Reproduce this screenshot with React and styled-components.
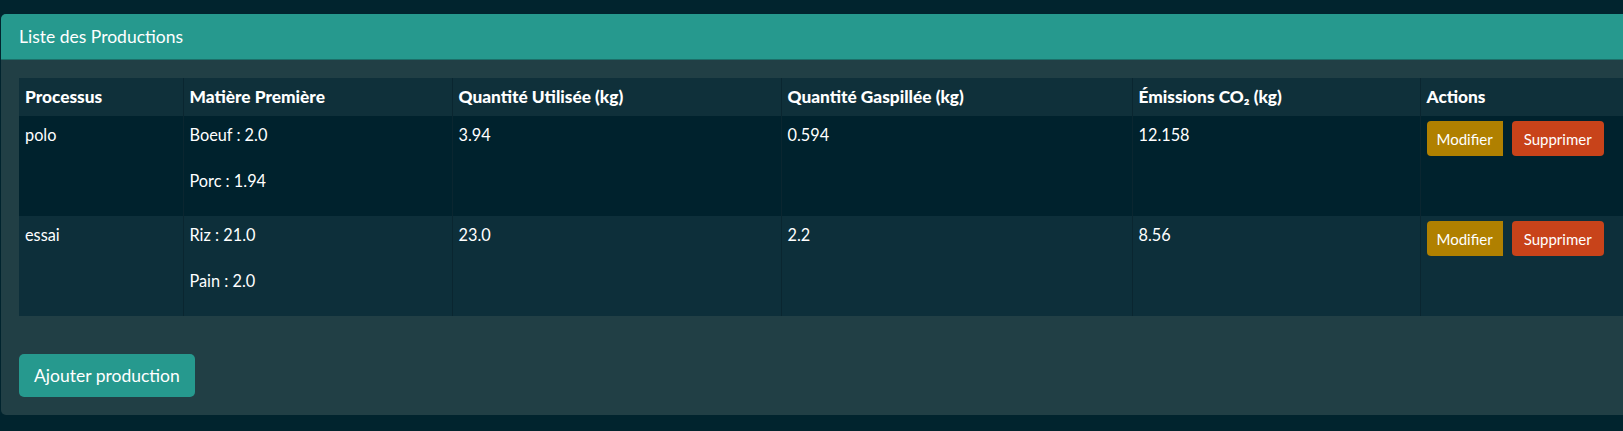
import React from "react";
import styled, { createGlobalStyle } from "styled-components";

const Global = createGlobalStyle`
  html, body { margin: 0; padding: 0; overflow: hidden; background: #01242e; }
  body { font-family: "Lato", "Noto Sans", sans-serif; color: #ffffff; }
  * { box-sizing: border-box; }
`;

const Page = styled.div`
  padding: 14px 0 0 1px;
  min-height: 431px;
`;

const Card = styled.section`
  width: 1700px;
  background: #213f45;
  border-radius: 5px;
  overflow: hidden;
`;

const CardHeader = styled.header`
  height: 46px;
  background: #26998e;
  display: flex;
  align-items: center;
  padding: 0 18px;
  font-size: 17.5px;
  border-bottom: 1px solid #1c6f69;
`;

const CardBody = styled.div`
  padding: 18px 18px 18px 18px;
`;

const Table = styled.table`
  border-collapse: collapse;
  table-layout: fixed;
  width: 1660px;
  font-size: 16.3px;
  margin-bottom: 38px;
`;

const Th = styled.th`
  text-align: left;
  font-weight: 900;
  font-size: 17.3px;
  padding: 4px 6px;
  line-height: 30px;
  background: #0f303a;
  border-left: 1px solid #0a2630;
  &:first-child { border-left: none; }
`;

const Row = styled.tr`
  background: ${(p) => (p.$dark ? "#00222d" : "#0d2f3a")};
`;

const Td = styled.td`
  vertical-align: top;
  padding: 4px 6px;
  line-height: 30px;
  border-left: 1px solid #0a2630;
  &:first-child { border-left: none; }
`;

const Item = styled.p`
  margin: 0 0 16px 0;
`;

const Actions = styled.div`
  display: flex;
  gap: 9px;
  padding-top: 1px;
`;

const ActionButton = styled.button`
  font-family: inherit;
  font-size: 15px;
  color: #fff;
  border: none;
  height: 35px;
  padding: 0 ${(p) => (p.$variant === "warn" ? "10px" : "12px")};
  background: ${(p) => (p.$variant === "warn" ? "#b08000" : "#c8431a")};
  border-radius: ${(p) => (p.$variant === "warn" ? "4px 0 0 4px" : "4px")};
`;

const AddButton = styled.button`
  font-family: inherit;
  font-size: 17.5px;
  color: #fff;
  background: #26998e;
  border: none;
  border-radius: 5px;
  height: 43px;
  padding: 0 15px;
`;

const cols = [164, 269, 329, 351, 288, 259];
const headers = [
  "Processus",
  "Matière Première",
  "Quantité Utilisée (kg)",
  "Quantité Gaspillée (kg)",
  "Émissions CO₂ (kg)",
  "Actions",
];

const data = [
  { name: "polo", items: ["Boeuf : 2.0", "Porc : 1.94"], used: "3.94", waste: "0.594", co2: "12.158" },
  { name: "essai", items: ["Riz : 21.0", "Pain : 2.0"], used: "23.0", waste: "2.2", co2: "8.56" },
];

export default function App() {
  return (
    <Page>
      <Global />
      <Card>
        <CardHeader>Liste des Productions</CardHeader>
        <CardBody>
          <Table>
            <colgroup>
              {cols.map((w, i) => (
                <col key={i} style={{ width: w }} />
              ))}
            </colgroup>
            <thead>
              <tr>
                {headers.map((h) => (
                  <Th key={h}>{h}</Th>
                ))}
              </tr>
            </thead>
            <tbody>
              {data.map((r, i) => (
                <Row key={r.name} $dark={i === 0}>
                  <Td>{r.name}</Td>
                  <Td>
                    {r.items.map((it) => (
                      <Item key={it}>{it}</Item>
                    ))}
                  </Td>
                  <Td>{r.used}</Td>
                  <Td>{r.waste}</Td>
                  <Td>{r.co2}</Td>
                  <Td>
                    <Actions>
                      <ActionButton $variant="warn">Modifier</ActionButton>
                      <ActionButton $variant="danger">Supprimer</ActionButton>
                    </Actions>
                  </Td>
                </Row>
              ))}
            </tbody>
          </Table>
          <AddButton>Ajouter production</AddButton>
        </CardBody>
      </Card>
    </Page>
  );
}
